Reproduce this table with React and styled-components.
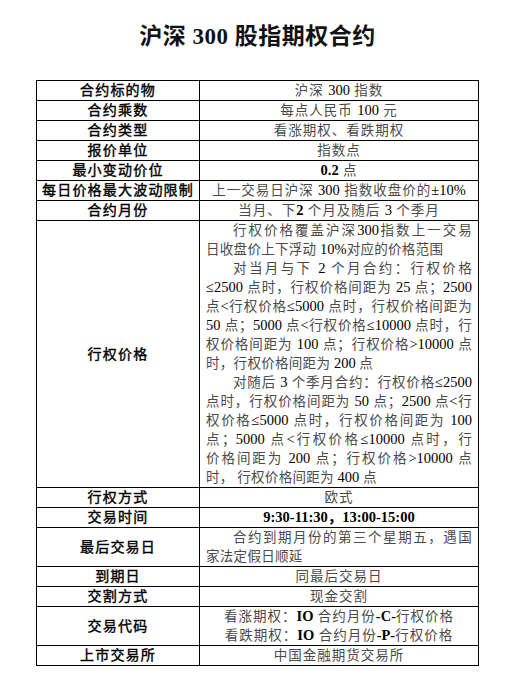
import styled, { createGlobalStyle } from "styled-components";

const GlobalStyle = createGlobalStyle`
  html, body {
    margin: 0;
    padding: 0;
    background: #fff;
  }
  body {
    font-family: "Liberation Serif", "Noto Sans CJK SC", serif;
    color: #111;
  }
`;

const Page = styled.div`
  width: 515px;
  min-height: 679px;
  display: flex;
  flex-direction: column;
  align-items: center;
`;

const Title = styled.h1`
  margin: 22px 0 28px;
  font-size: 23px;
  line-height: 30px;
  font-weight: 700;
  color: #111;
  letter-spacing: 0.5px;
`;

const Table = styled.table`
  width: 443px;
  border-collapse: collapse;
  table-layout: fixed;
  td {
    border: 1px solid #000;
    padding: 0;
    line-height: 19px;
    vertical-align: middle;
  }
`;

const LabelCell = styled.td`
  width: 162px;
  text-align: center;
  font-size: 14px;
  font-weight: 400;
  letter-spacing: 1.2px;
  color: #000;
  -webkit-text-stroke: 0.4px #000;
`;

const ValueCell = styled.td`
  text-align: ${(p) => (p.$block ? "left" : "center")};
  padding: ${(p) => (p.$block ? "0 6px !important" : "0")};
  font-size: 13.5px;
  letter-spacing: ${(p) => (p.$block ? "0.3px" : "1px")};
  color: #4a4a4a;
`;

const Line = styled.div`
  white-space: nowrap;
  text-align: ${(p) => (p.$full ? "justify" : "left")};
  text-align-last: ${(p) => (p.$full ? "justify" : "left")};
  text-indent: ${(p) => (p.$indent ? "2em" : "0")};
`;

const Num = styled.span`
  color: #000;
  font-size: 14.5px;
  font-weight: ${(p) => (p.$bold ? 700 : 400)};
  letter-spacing: 0;
`;

const strikeLines = [
  { indent: true, full: true, text: <>行权价格覆盖沪深<Num>300</Num>指数上一交易</> },
  { text: <>日收盘价上下浮动 <Num>10%</Num>对应的价格范围</> },
  { indent: true, full: true, text: <>对当月与下 <Num>2</Num> 个月合约：行权价格</> },
  { full: true, text: <><Num>≤2500</Num> 点时，行权价格间距为 <Num>25</Num> 点；<Num>2500</Num></> },
  { full: true, text: <>点<Num>&lt;</Num>行权价格<Num>≤5000</Num> 点时，行权价格间距为</> },
  { full: true, text: <><Num>50</Num> 点；<Num>5000</Num> 点<Num>&lt;</Num>行权价格<Num>≤10000</Num> 点时，行</> },
  { full: true, text: <>权价格间距为 <Num>100</Num> 点；行权价格<Num>&gt;10000</Num> 点</> },
  { text: <>时，行权价格间距为 <Num>200</Num> 点</> },
  { indent: true, full: true, text: <>对随后 <Num>3</Num> 个季月合约：行权价格<Num>≤2500</Num></> },
  { full: true, text: <>点时，行权价格间距为 <Num>50</Num> 点；<Num>2500</Num> 点<Num>&lt;</Num>行</> },
  { full: true, text: <>权价格<Num>≤5000</Num> 点时，行权价格间距为 <Num>100</Num></> },
  { full: true, text: <>点；<Num>5000</Num> 点<Num>&lt;</Num>行权价格<Num>≤10000</Num> 点时，行</> },
  { full: true, text: <>价格间距为 <Num>200</Num> 点；行权价格<Num>&gt;10000</Num> 点</> },
  { text: <>时， 行权价格间距为 <Num>400</Num> 点</> },
];

const lastDayLines = [
  { indent: true, full: true, text: <>合约到期月份的第三个星期五，遇国</> },
  { text: <>家法定假日顺延</> },
];

function Lines({ lines }) {
  return lines.map((l, i) => (
    <Line key={i} $full={l.full} $indent={l.indent}>
      {l.text}
    </Line>
  ));
}

const rows = [
  ["合约标的物", <>沪深 <Num>300</Num> 指数</>],
  ["合约乘数", <>每点人民币 <Num>100</Num> 元</>],
  ["合约类型", "看涨期权、看跌期权"],
  ["报价单位", "指数点"],
  ["最小变动价位", <><Num $bold>0.2</Num> 点</>],
  ["每日价格最大波动限制", <>上一交易日沪深 <Num>300</Num> 指数收盘价的<Num>±10%</Num></>],
  ["合约月份", <>当月、下<Num $bold>2</Num> 个月及随后 <Num>3</Num> 个季月</>],
  ["行权价格", <Lines lines={strikeLines} />, true],
  ["行权方式", "欧式"],
  ["交易时间", <Num $bold>9:30-11:30，13:00-15:00</Num>],
  ["最后交易日", <Lines lines={lastDayLines} />, true],
  ["到期日", "同最后交易日"],
  ["交割方式", "现金交割"],
  [
    "交易代码",
    <>
      <div>看涨期权：<Num $bold>IO</Num> 合约月份<Num $bold>-C-</Num>行权价格</div>
      <div>看跌期权：<Num $bold>IO</Num> 合约月份<Num $bold>-P-</Num>行权价格</div>
    </>,
  ],
  ["上市交易所", "中国金融期货交易所"],
];

export default function App() {
  return (
    <>
      <GlobalStyle />
      <Page>
        <Title>沪深 300 股指期权合约</Title>
        <Table>
          <tbody>
            {rows.map(([label, value, block]) => (
              <tr key={label}>
                <LabelCell>{label}</LabelCell>
                <ValueCell $block={block}>{value}</ValueCell>
              </tr>
            ))}
          </tbody>
        </Table>
      </Page>
    </>
  );
}
